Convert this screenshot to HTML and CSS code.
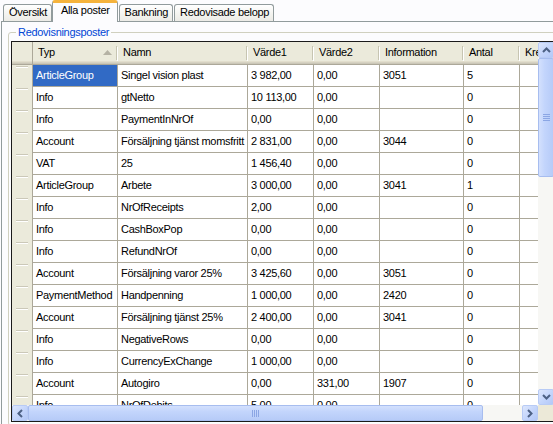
FILE: index.html
```html
<!DOCTYPE html>
<html>
<head>
<meta charset="utf-8">
<link rel="stylesheet" href="styles.css">
</head>
<body>
<div class="app">
  <div class="tabstrip">
    <div class="tab">Översikt</div>
    <div class="tab active">Alla poster</div>
    <div class="tab">Bankning</div>
    <div class="tab">Redovisade belopp</div>
  </div>
  <div class="panel">
    <fieldset class="group">
      <legend>Redovisningsposter</legend>
      <div class="grid">
        <div class="data">
          <div class="row head">
            <div class="hc rh"></div>
            <div class="hc sorted"><span>Typ</span><svg class="sort" width="9" height="5" viewBox="0 0 9 5"><path d="M4.5 0 L9 5 L0 5 Z" fill="#b5b2a4"/></svg></div>
            <div class="hc">Namn</div>
            <div class="hc">Värde1</div>
            <div class="hc">Värde2</div>
            <div class="hc">Information</div>
            <div class="hc">Antal</div>
            <div class="hc">Kredit</div>
          </div>
          <div class="row"><div class="rh"></div><div class="c sel">ArticleGroup</div><div class="c">Singel vision plast</div><div class="c">3 982,00</div><div class="c">0,00</div><div class="c">3051</div><div class="c">5</div><div class="c"></div></div>
          <div class="row"><div class="rh"></div><div class="c">Info</div><div class="c">gtNetto</div><div class="c">10 113,00</div><div class="c">0,00</div><div class="c"></div><div class="c">0</div><div class="c"></div></div>
          <div class="row"><div class="rh"></div><div class="c">Info</div><div class="c">PaymentInNrOf</div><div class="c">0,00</div><div class="c">0,00</div><div class="c"></div><div class="c">0</div><div class="c"></div></div>
          <div class="row"><div class="rh"></div><div class="c">Account</div><div class="c">Försäljning tjänst momsfritt</div><div class="c">2 831,00</div><div class="c">0,00</div><div class="c">3044</div><div class="c">0</div><div class="c"></div></div>
          <div class="row"><div class="rh"></div><div class="c">VAT</div><div class="c">25</div><div class="c">1 456,40</div><div class="c">0,00</div><div class="c"></div><div class="c">0</div><div class="c"></div></div>
          <div class="row"><div class="rh"></div><div class="c">ArticleGroup</div><div class="c">Arbete</div><div class="c">3 000,00</div><div class="c">0,00</div><div class="c">3041</div><div class="c">1</div><div class="c"></div></div>
          <div class="row"><div class="rh"></div><div class="c">Info</div><div class="c">NrOfReceipts</div><div class="c">2,00</div><div class="c">0,00</div><div class="c"></div><div class="c">0</div><div class="c"></div></div>
          <div class="row"><div class="rh"></div><div class="c">Info</div><div class="c">CashBoxPop</div><div class="c">0,00</div><div class="c">0,00</div><div class="c"></div><div class="c">0</div><div class="c"></div></div>
          <div class="row"><div class="rh"></div><div class="c">Info</div><div class="c">RefundNrOf</div><div class="c">0,00</div><div class="c">0,00</div><div class="c"></div><div class="c">0</div><div class="c"></div></div>
          <div class="row"><div class="rh"></div><div class="c">Account</div><div class="c">Försäljning varor 25%</div><div class="c">3 425,60</div><div class="c">0,00</div><div class="c">3051</div><div class="c">0</div><div class="c"></div></div>
          <div class="row"><div class="rh"></div><div class="c">PaymentMethod</div><div class="c">Handpenning</div><div class="c">1 000,00</div><div class="c">0,00</div><div class="c">2420</div><div class="c">0</div><div class="c"></div></div>
          <div class="row"><div class="rh"></div><div class="c">Account</div><div class="c">Försäljning tjänst 25%</div><div class="c">2 400,00</div><div class="c">0,00</div><div class="c">3041</div><div class="c">0</div><div class="c"></div></div>
          <div class="row"><div class="rh"></div><div class="c">Info</div><div class="c">NegativeRows</div><div class="c">0,00</div><div class="c">0,00</div><div class="c"></div><div class="c">0</div><div class="c"></div></div>
          <div class="row"><div class="rh"></div><div class="c">Info</div><div class="c">CurrencyExChange</div><div class="c">1 000,00</div><div class="c">0,00</div><div class="c"></div><div class="c">0</div><div class="c"></div></div>
          <div class="row"><div class="rh"></div><div class="c">Account</div><div class="c">Autogiro</div><div class="c">0,00</div><div class="c">331,00</div><div class="c">1907</div><div class="c">0</div><div class="c"></div></div>
          <div class="row"><div class="rh"></div><div class="c">Info</div><div class="c">NrOfDebits</div><div class="c">5,00</div><div class="c">0,00</div><div class="c"></div><div class="c">0</div><div class="c"></div></div>
        </div>
        <div class="vscroll">
          <div class="sbtn"><svg width="9" height="6" viewBox="0 0 9 6"><path d="M1 5 L4.5 1.5 L8 5" stroke="#4d6185" stroke-width="2" fill="none"/></svg></div>
          <div class="vthumb"><svg width="7" height="7" viewBox="0 0 7 7"><path d="M0 0.5H7M0 2.5H7M0 4.5H7M0 6.5H7" stroke="#8ba6e4" stroke-width="1"/></svg></div>
          <div class="track"></div>
          <div class="sbtn"><svg width="9" height="6" viewBox="0 0 9 6"><path d="M1 1 L4.5 4.5 L8 1" stroke="#4d6185" stroke-width="2" fill="none"/></svg></div>
        </div>
        <div class="hscroll">
          <div class="sbtn"><svg width="6" height="9" viewBox="0 0 6 9"><path d="M5 1 L1.5 4.5 L5 8" stroke="#4d6185" stroke-width="2" fill="none"/></svg></div>
          <div class="hthumb"><svg width="7" height="7" viewBox="0 0 7 7"><path d="M0.5 0V7M2.5 0V7M4.5 0V7M6.5 0V7" stroke="#8ba6e4" stroke-width="1"/></svg></div>
          <div class="track"></div>
          <div class="sbtn"><svg width="6" height="9" viewBox="0 0 6 9"><path d="M1 1 L4.5 4.5 L1 8" stroke="#4d6185" stroke-width="2" fill="none"/></svg></div>
        </div>
        <div class="corner"></div>
      </div>
    </fieldset>
  </div>
</div>
</body>
</html>
```

FILE: styles.css
```css
* { box-sizing: border-box; }

html, body {
  margin: 0;
  width: 553px;
  height: 424px;
  overflow: hidden;
}

body {
  background: #fcfcfe;
  font: 11px "Liberation Sans", Arial, sans-serif;
  letter-spacing: -0.3px;
  color: #000;
}

.app {
  width: 570px;
  height: 424px;
  display: flex;
  flex-direction: column;
  overflow: hidden;
}

/* ---------- tabs ---------- */
.tabstrip {
  display: flex;
  align-items: flex-end;
  height: 21px;
  flex: none;
  padding-left: 3px;
  position: relative;
  z-index: 1;
}

.tab {
  height: 17px;
  padding: 0 4px 2px 5px;
  line-height: 14px;
  border: 1px solid #919b9c;
  border-bottom: none;
  border-radius: 3px 3px 0 0;
  background: linear-gradient(#ffffff, #f3f3ef 60%, #ecebe6);
  margin-right: 1px;
  white-space: nowrap;
}

.tab.active {
  height: 22px;
  margin-bottom: -1px;
  margin-left: -1px;
  padding: 0 7px 5px 8px;
  border-top: 3px solid #f5b33c;
  background: #fcfcfe;
}

/* ---------- panel & group ---------- */
.panel {
  flex: 1;
  min-height: 0;
  overflow: hidden;
  margin-left: 1px;
  border-top: 1px solid #919b9c;
  border-left: 1px solid #919b9c;
  padding: 4px 6px 0 6px;
  background: #fcfcfe;
}

.group {
  margin: 0;
  min-width: 0;
  border: 1px solid #d0d0bf;
  border-radius: 3px;
  padding: 2px 0 0 1px;
  height: 400px;
}

.group legend {
  margin-left: 6px;
  padding: 0 2px;
  line-height: 13px;
  color: #0046d5;
}

/* ---------- data grid ---------- */
.grid {
  margin-left: 1px;
  width: 544px;
  height: 381px;
  border: 1px solid #1a1a1a;
  display: grid;
  grid-template-columns: 1fr 16px;
  grid-template-rows: 1fr 16px;
  background: #fff;
}

.data {
  overflow: hidden;
  min-width: 0;
  min-height: 0;
}

.row {
  display: grid;
  grid-template-columns: 21px 85px 130px 66px 66px 84px 56px 60px;
  height: 22px;
}

.row .c {
  border-right: 1px solid #aca899;
  border-bottom: 1px solid #aca899;
  padding-left: 3px;
  line-height: 21px;
  white-space: nowrap;
  overflow: hidden;
  background: #fff;
}

.row .c.sel {
  background: #316ac5;
  color: #fff;
}

.row .rh {
  border-right: 1px solid #aca899;
  background:
    linear-gradient(#cbc8b8, #cbc8b8) 4px 1px / 12px 1px no-repeat,
    linear-gradient(#fff, #fff) 4px 2px / 12px 1px no-repeat,
    #ebeadb;
}

.row.head {
  height: 23px;
}

.row.head .hc {
  display: flex;
  align-items: center;
  padding: 0 0 2px 5px;
  border-bottom: 1px solid #aca899;
  white-space: nowrap;
  overflow: hidden;
  background:
    linear-gradient(#c7c5b2, #c7c5b2) right 1px top 4px / 1px 14px no-repeat,
    linear-gradient(#fff, #fff) right 0 top 5px / 1px 14px no-repeat,
    linear-gradient(to bottom, #ebeadb 0 19px, #e2decd 19px 20px, #d6d2c2 20px 21px, #cbc7b8 21px 22px);
}

.row.head .hc.rh {
  border-right: 1px solid #aca899;
  padding: 0;
  background:
    linear-gradient(to bottom, #ebeadb 0 19px, #e2decd 19px 20px, #d6d2c2 20px 21px, #cbc7b8 21px 22px);
}

.hc.sorted .sort {
  margin-left: auto;
  margin-right: 6px;
}

/* ---------- scrollbars ---------- */
.vscroll {
  display: flex;
  flex-direction: column;
  background: #f7f7f4;
}

.hscroll {
  display: flex;
  background: #f7f7f4;
}

.sbtn {
  width: 16px;
  height: 16px;
  flex: none;
  display: flex;
  align-items: center;
  justify-content: center;
  border: 1px solid #b8cbf5;
  border-radius: 2px;
  background: linear-gradient(135deg, #dce6fd, #c1d3fb 60%, #b3c8f7);
}

.vthumb {
  height: 119px;
  flex: none;
  display: flex;
  align-items: center;
  justify-content: center;
  border: 1px solid #a7bdef;
  border-radius: 2px;
  background: linear-gradient(to right, #d3e0fd, #c3d5fc 40%, #b6cbf8);
}

.hthumb {
  width: 455px;
  flex: none;
  display: flex;
  align-items: center;
  justify-content: center;
  border: 1px solid #a7bdef;
  border-radius: 2px;
  background: linear-gradient(to bottom, #d3e0fd, #c3d5fc 40%, #b6cbf8);
}

.track {
  flex: 1;
}

.corner {
  background: #ece9d8;
}
```
